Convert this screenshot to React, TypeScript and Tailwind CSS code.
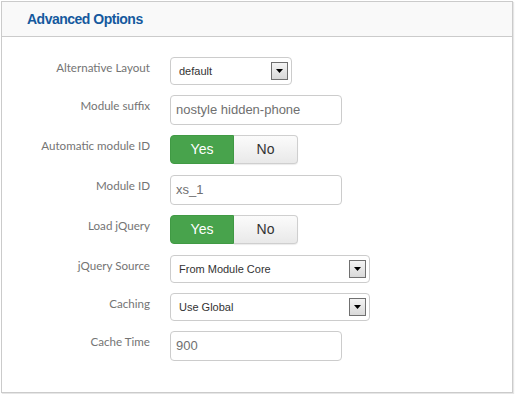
import type { FC, ReactNode } from 'react'

const labelFont = { fontFamily: 'Lato, "Noto Sans", sans-serif' }

const Row: FC<{ label: string; children: ReactNode }> = ({ label, children }) => (
  <div className="flex items-start">
    <div className="w-[148px] shrink-0 pt-[1px] text-right text-[11.6px] leading-[20px] text-[#747474]" style={labelFont}>
      {label}
    </div>
    <div className="ml-5">{children}</div>
  </div>
)

const Select: FC<{ value: string; width: string }> = ({ value, width }) => (
  <div
    className={`flex h-[28px] ${width} items-center justify-between rounded-[4px] border border-[#cccccc] bg-white pl-[8px] pr-[3px] font-['Liberation_Sans',Arial,sans-serif] text-[11px] text-[#333]`}
  >
    <span>{value}</span>
    <span className="flex h-[18px] w-[17px] items-center justify-center border border-[#707070] bg-gradient-to-b from-[#f4f4f4] to-[#d9d9d9]">
      <svg width="7" height="4" viewBox="0 0 7 4">
        <path d="M0 0h7L3.5 4z" fill="#000" />
      </svg>
    </span>
  </div>
)

const Input: FC<{ value: string }> = ({ value }) => (
  <div className="flex h-[30px] w-[172px] items-center rounded-[4px] border border-[#cccccc] bg-white pl-[5px] font-['Liberation_Sans',Arial,sans-serif] text-[13px] text-[#707070]">
    {value}
  </div>
)

const Toggle: FC = () => (
  <div className="flex h-[29px] w-[128px] font-['Liberation_Sans',Arial,sans-serif] text-[14px]">
    <div className="flex w-[64px] items-center justify-center rounded-l-[4px] border border-[#409a44] bg-[#48a34c] text-white">
      Yes
    </div>
    <div className="flex w-[64px] items-center justify-center rounded-r-[4px] border border-l-0 border-[#cfcfcf] bg-gradient-to-b from-[#fbfbfb] to-[#e9e9e9] text-[#333] shadow-[0_1px_1px_rgba(0,0,0,0.08)]">
      No
    </div>
  </div>
)

export default function App() {
  return (
    <div className="h-[394px] w-[515px] bg-white pl-px pt-px">
      <div className="flex h-[392px] w-[512px] flex-col border border-[#cbcbcb] bg-white shadow-[1px_1px_1px_#e6e6e6]">
        <div className="flex h-[35px] shrink-0 items-center border-b border-[#cbcbcb] bg-[#f9f9f9] pl-[25px]">
          <h3 className="font-['Liberation_Sans',Arial,sans-serif] text-[14px] font-bold tracking-[-0.5px] text-[#15599e]">
            Advanced Options
          </h3>
        </div>
        <div className="flex flex-col pt-[20px]">
          <div className="mb-[10px]">
            <Row label="Alternative Layout">
              <Select value="default" width="w-[122px]" />
            </Row>
          </div>
          <div className="mb-[10px]">
            <Row label="Module suffix">
              <Input value="nostyle hidden-phone" />
            </Row>
          </div>
          <div className="mb-[11px]">
            <Row label="Automatic module ID">
              <Toggle />
            </Row>
          </div>
          <div className="mb-[10px]">
            <Row label="Module ID">
              <Input value="xs_1" />
            </Row>
          </div>
          <div className="mb-[11px]">
            <Row label="Load jQuery">
              <Toggle />
            </Row>
          </div>
          <div className="mb-[10px]">
            <Row label="jQuery Source">
              <Select value="From Module Core" width="w-[200px]" />
            </Row>
          </div>
          <div className="mb-[10px]">
            <Row label="Caching">
              <Select value="Use Global" width="w-[200px]" />
            </Row>
          </div>
          <Row label="Cache Time">
            <Input value="900" />
          </Row>
        </div>
      </div>
    </div>
  )
}
